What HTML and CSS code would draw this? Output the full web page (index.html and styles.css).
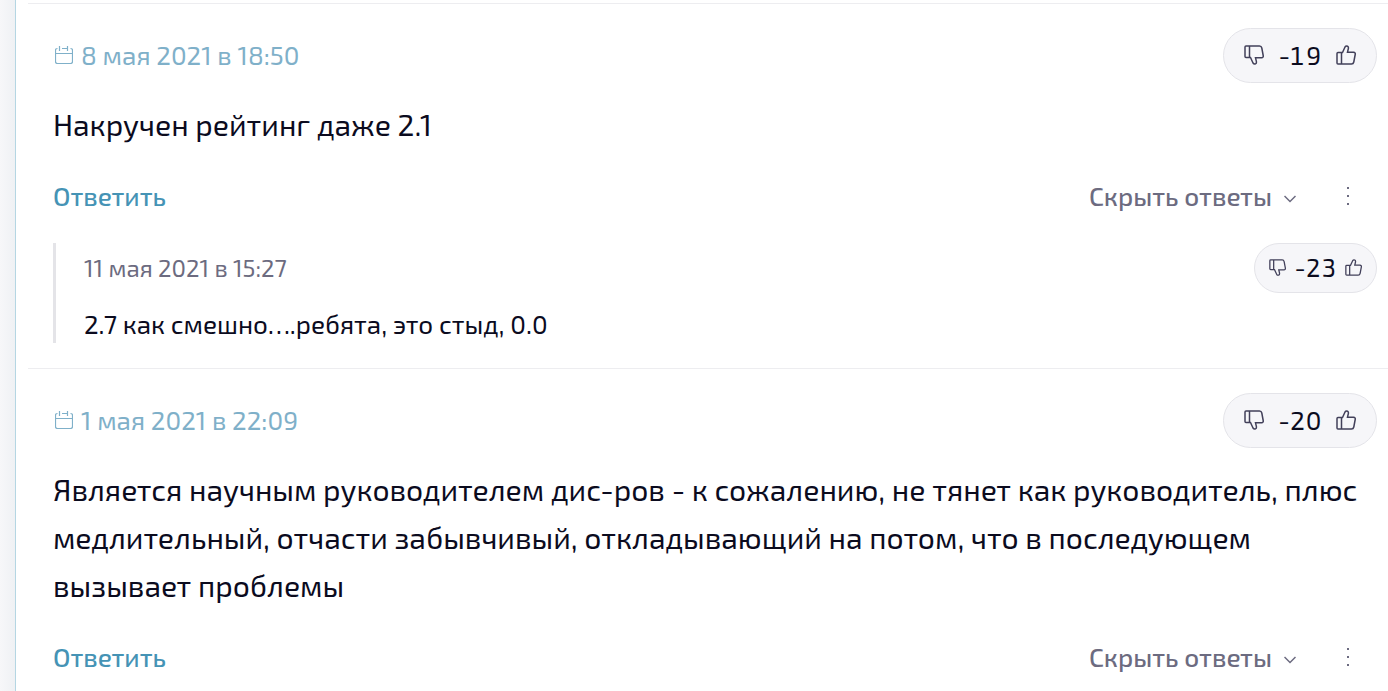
FILE: index.html
```
<!DOCTYPE html>
<html lang="ru">
<head>
    <meta charset="utf-8">
    <meta name="viewport" content="width=device-width, initial-scale=1">
    <title>Отзывы</title>
    <link rel="stylesheet" href="styles.css">
</head>
<body>
    <!-- icons -->
    <svg class="sprite" aria-hidden="true">
        <symbol id="calendar" viewBox="0 0 18 18">
            <path d="M2.500 2.500Q.5 2.500 .5 4.500V15.500Q.5 17.500 2.500 17.500H15.500Q17.500 17.500 17.500 15.500V4.500Q17.500 2.500 15.500 2.500M7 2.500H12.500M.5 7.500H17.500M4.500 0V5M12.500 0V5"/>
        </symbol>
        <symbol id="like" viewBox="0 0 20 20">
            <path d="M1 8.500Q1 7.500 2 7.500H6.500L9 2Q10 .5 11.500 1.200Q12.800 2 12.300 3.800L11.500 7.200H17.500Q19.600 7.500 19.200 9.500L17.800 17Q17.400 19 15.500 19H2Q1 19 1 18ZM5.500 7.500V19"/>
        </symbol>
        <symbol id="dislike" viewBox="0 0 20 20">
            <path d="M1 2Q1 1 2 1H15.500Q17.400 1 17.800 3L19.200 10.500Q19.600 12.500 17.500 12.800H11.500L12.300 16.200Q12.800 18.500 11.500 18.900Q10 19.500 9 18L6.500 12.500H2Q1 12.500 1 11.500ZM5.500 1V12.500"/>
        </symbol>
        <symbol id="chevron" viewBox="0 0 12 8">
            <path d="M.5 1L6 6.500L11.500 1"/>
        </symbol>
        <symbol id="dots" viewBox="0 0 4 20">
            <path d="M1 1H3V3H1ZM1 9H3V11H1ZM1 17H3V19H1Z"/>
        </symbol>
    </svg>

    <main class="comments">
        <article class="comment">
            <header class="comment-head">
                <a class="date" href="#c1"><svg class="icon-calendar"><use href="#calendar"/></svg>8 мая 2021 в 18:50</a>
                <div class="rating">
                    <button type="button" aria-label="Не нравится"><svg><use href="#dislike"/></svg></button>
                    <span>-19</span>
                    <button type="button" aria-label="Нравится"><svg><use href="#like"/></svg></button>
                </div>
            </header>
            <p class="text">Накручен рейтинг даже 2.1</p>
            <footer class="comment-foot">
                <a class="answer" href="#answer">Ответить</a>
                <button type="button" class="toggle">Скрыть ответы<svg><use href="#chevron"/></svg></button>
                <button type="button" class="more" aria-label="Ещё"><svg><use href="#dots"/></svg></button>
            </footer>
            <div class="reply">
                <header class="comment-head">
                    <span class="reply-date">11 мая 2021 в 15:27</span>
                    <div class="rating rating-small">
                        <button type="button" aria-label="Не нравится"><svg><use href="#dislike"/></svg></button>
                        <span>-23</span>
                        <button type="button" aria-label="Нравится"><svg><use href="#like"/></svg></button>
                    </div>
                </header>
                <p class="reply-text">2.7 как смешно….ребята, это стыд, 0.0</p>
            </div>
        </article>

        <article class="comment">
            <header class="comment-head">
                <a class="date" href="#c2"><svg class="icon-calendar"><use href="#calendar"/></svg>1 мая 2021 в 22:09</a>
                <div class="rating">
                    <button type="button" aria-label="Не нравится"><svg><use href="#dislike"/></svg></button>
                    <span>-20</span>
                    <button type="button" aria-label="Нравится"><svg><use href="#like"/></svg></button>
                </div>
            </header>
            <p class="text">Является научным руководителем дис-ров - к сожалению, не тянет как руководитель, плюс медлительный, отчасти забывчивый, откладывающий на потом, что в последующем вызывает проблемы</p>
            <footer class="comment-foot">
                <a class="answer" href="#answer">Ответить</a>
                <button type="button" class="toggle">Скрыть ответы<svg><use href="#chevron"/></svg></button>
                <button type="button" class="more" aria-label="Ещё"><svg><use href="#dots"/></svg></button>
            </footer>
        </article>
    </main>
</body>
</html>
```
FILE: styles.css
```
* {
    box-sizing: border-box;
}
body {
    margin: 0;
    padding-left: 15px;
    background: linear-gradient(to right, #f7f7f9, #eff1f4 15px);
    font-family: "Exo 2", Roboto, "Noto Sans", sans-serif;
    font-size: 26px;
    color: #0b0b1e;
}
a {
    text-decoration: none;
}
button {
    display: flex;
    align-items: center;
    padding: 0;
    border: 0;
    background: none;
    font: inherit;
    color: inherit;
    cursor: pointer;
}
svg {
    display: block;
    fill: none;
    stroke: currentColor;
}
.sprite {
    display: none;
}
.comments {
    min-height: 100vh;
    padding: 3px 0 0 12px;
    border-left: 1px solid #b5d6e3;
    background: #fff;
}
.comment {
    padding: 24px 11px 25px 25px;
    border-top: 1px solid #ededf0;
}
.comment-head {
    display: flex;
    align-items: center;
    justify-content: space-between;
}
.date {
    display: flex;
    align-items: center;
    gap: 8px;
    padding: 0 0 2px 2px;
    color: #7fb0c9;
}
.icon-calendar {
    width: 18px;
    height: 18px;
    stroke-width: 1.2;
}
.rating {
    display: flex;
    align-items: center;
    justify-content: space-between;
    width: 154px;
    height: 55px;
    padding: 0 20px;
    border: 1px solid #e4e4e9;
    border-radius: 28px;
    background: #f6f6f9;
}
.rating span {
    padding-bottom: 2px;
    font-variant-numeric: tabular-nums;
}
.rating button {
    padding-bottom: 2px;
    color: #42405a;
}
.rating svg {
    width: 20px;
    height: 20px;
    stroke-width: 1.5;
}
.rating-small {
    width: 123px;
    height: 50px;
    padding: 0 14px;
}
.rating-small span {
    font-size: 25px;
}
.rating-small svg {
    width: 17px;
    height: 17px;
}
.text {
    margin: 17px 0 28px;
    font-size: 30px;
    line-height: 48px;
}
.comment-foot {
    display: flex;
    align-items: center;
    height: 38px;
}
.answer {
    margin-right: auto;
    font-weight: 500;
    color: #4593b5;
}
.toggle {
    gap: 12px;
    font-weight: 500;
    color: #6c6b80;
}
.toggle svg {
    width: 12px;
    height: 8px;
    margin-top: 8px;
    stroke-width: 1.5;
}
.more {
    justify-content: center;
    width: 20px;
    margin: 2px 19px 0 42px;
    color: #6c6b80;
}
.more svg {
    width: 4px;
    height: 20px;
    fill: currentColor;
    stroke: none;
}
.reply {
    margin-top: 29px;
    padding-left: 28px;
    border-left: 3px solid #e4e4e8;
}
.reply-date {
    padding-bottom: 2px;
    font-size: 24px;
    color: #6c6b80;
}
.reply-text {
    margin: 13px 0 0;
    padding-bottom: 1px;
    font-size: 26px;
    line-height: 36px;
}
```
